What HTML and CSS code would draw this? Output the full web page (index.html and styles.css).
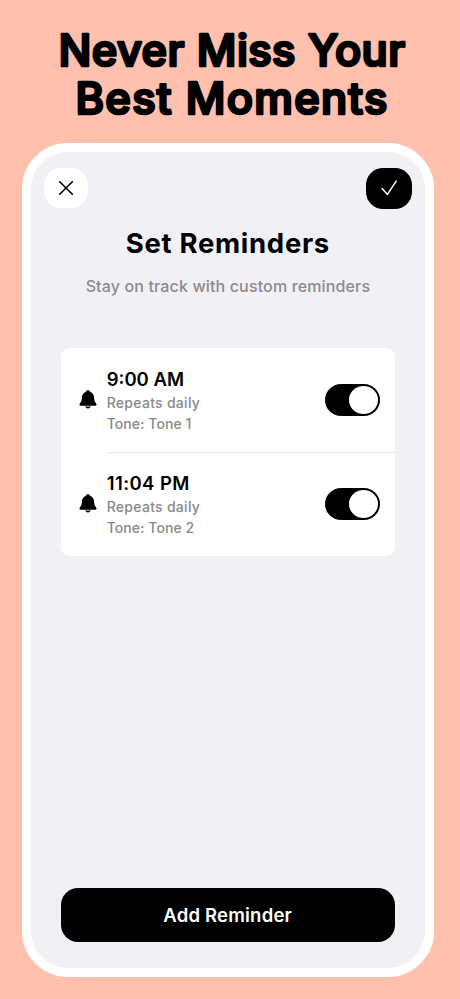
FILE: index.html
```html
<!DOCTYPE html>
<html lang="en">
<head>
<meta charset="utf-8">
<title>Set Reminders</title>
<link rel="stylesheet" href="styles.css">
</head>
<body>
<svg class="headline" width="460" height="143" viewBox="0 0 460 143" role="heading">
  <text x="58.5" y="66" textLength="346.5" lengthAdjust="spacing">Never Miss Your</text>
  <text x="75.5" y="113.5" textLength="312" lengthAdjust="spacing">Best Moments</text>
</svg>
<main class="phone">
  <nav class="bar">
    <button class="close" aria-label="Close"><svg width="16" height="16" viewBox="0 0 16 16"><path d="M1.7 1.7 14.3 14.3M14.3 1.7 1.7 14.3"/></svg></button>
    <button class="done" aria-label="Done"><svg width="18" height="18" viewBox="0 0 18 18"><path d="M2.2 9.6 7.4 15.4 16.2 2.2"/></svg></button>
  </nav>
  <h1>Set Reminders</h1>
  <p class="subtitle">Stay on track with custom reminders</p>
  <section class="card">
    <div class="row">
      <svg class="bell" width="18" height="19" viewBox="0 0 18 19"><path d="M9 .2C7.8.2 7 .9 6.8 1.9 4.2 2.7 3 4.9 2.9 7.6c-.1 2.9-.5 4-1.6 5.3C.7 13.6.4 14 .4 14.6c0 .7.5 1.100 1.200 1.100h14.800c.7 0 1.200-.4 1.200-1.100 0-.6-.3-1-.9-1.700-1.100-1.300-1.500-2.400-1.600-5.300-.1-2.700-1.300-4.900-3.900-5.700C11 .9 10.200.2 9 .2ZM6.200 16.600c.3 1.100 1.400 1.900 2.800 1.900s2.500-.8 2.800-1.900Z"/></svg>
      <div class="info"><strong>9:00 AM</strong><span>Repeats daily</span><span class="tone">Tone: Tone 1</span></div>
      <div class="toggle"><i></i></div>
    </div>
    <div class="row second">
      <svg class="bell" width="18" height="19" viewBox="0 0 18 19"><path d="M9 .2C7.8.2 7 .9 6.8 1.9 4.2 2.7 3 4.9 2.9 7.6c-.1 2.9-.5 4-1.6 5.3C.7 13.6.4 14 .4 14.6c0 .7.5 1.100 1.200 1.100h14.800c.7 0 1.200-.4 1.200-1.100 0-.6-.3-1-.9-1.700-1.100-1.300-1.500-2.400-1.600-5.300-.1-2.700-1.300-4.900-3.900-5.700C11 .9 10.200.2 9 .2ZM6.200 16.600c.3 1.100 1.400 1.900 2.800 1.900s2.500-.8 2.800-1.900Z"/></svg>
      <div class="info"><strong class="late">11:04 PM</strong><span>Repeats daily</span><span class="tone">Tone: Tone 2</span></div>
      <div class="toggle"><i></i></div>
    </div>
  </section>
  <button class="add">Add Reminder</button>
</main>
</body>
</html>
```
FILE: styles.css
```css
* { box-sizing: border-box; }
body {
  margin: 0;
  height: 999px;
  overflow: hidden;
  background: #ffc1ae;
  font-family: Inter, "Liberation Sans", sans-serif;
  color: #000;
}
button { border: 0; padding: 0; font: inherit; }
.headline { display: block; }
.headline text {
  font-size: 43.5px;
  font-weight: 500;
  stroke: #000;
  stroke-width: 2.7px;
  stroke-linejoin: round;
}
.phone {
  width: 412px;
  height: 834px;
  margin-left: 22.4px;
  border: 9px solid #fff;
  border-radius: 46px;
  background: #f1f0f5;
  display: flex;
  flex-direction: column;
  align-items: center;
}
.bar {
  width: 100%;
  padding: 15.5px 13.5px 0 12.5px;
  display: flex;
  justify-content: space-between;
  align-items: center;
}
.bar button {
  display: grid;
  place-items: center;
  border-radius: 17px;
}
.bar path { fill: none; stroke-linecap: round; stroke-linejoin: round; }
.close { width: 44px; height: 40px; background: #fff; }
.close path { stroke: #000; stroke-width: 1.6; }
.done { width: 45.5px; height: 41px; background: #000; }
.done path { stroke: #fff; stroke-width: 1.5; }
h1 {
  margin: 18px 1px 0 0;
  height: 32px;
  line-height: 32px;
  font-size: 27.5px;
  font-weight: 680;
  letter-spacing: .7px;
}
.subtitle {
  margin: 17px 1px 0 0;
  height: 20px;
  line-height: 20px;
  font-size: 16px;
  font-weight: 450;
  letter-spacing: .14px;
  color: #8b8a8f;
  white-space: nowrap;
}
.card {
  width: 334px;
  height: 208px;
  margin: 52.5px 1.4px 0 0;
  border-radius: 9px;
  background: #fff;
}
.row {
  height: 104px;
  padding: 0 15px 0 18px;
  display: flex;
  align-items: center;
}
.bell { margin-top: -1px; }
.second {
  background: linear-gradient(#e8e8ea, #e8e8ea) 47px -1px / 287px 2px no-repeat;
}
.info { margin: 0 0 0 10px; flex: 1; display: flex; flex-direction: column; }
.info strong { font-size: 18.5px; line-height: 26px; font-weight: 600; }
.info .late { letter-spacing: .42px; }
.info span { font-size: 14px; line-height: 21.5px; font-weight: 450; letter-spacing: .28px; color: #89898b; }
.info .tone { letter-spacing: .08px; }
.toggle {
  width: 55px;
  height: 32px;
  padding: 2px;
  border-radius: 16px;
  background: #000;
  display: flex;
  justify-content: flex-end;
}
.toggle i { width: 29px; height: 28px; border-radius: 50%; background: #fff; }
.add {
  width: 334px;
  height: 54px;
  margin: auto 1.4px 26px 0;
  border-radius: 17px;
  background: #000;
  color: #fff;
  font-size: 18.5px;
  font-weight: 600;
  letter-spacing: .2px;
}
```
